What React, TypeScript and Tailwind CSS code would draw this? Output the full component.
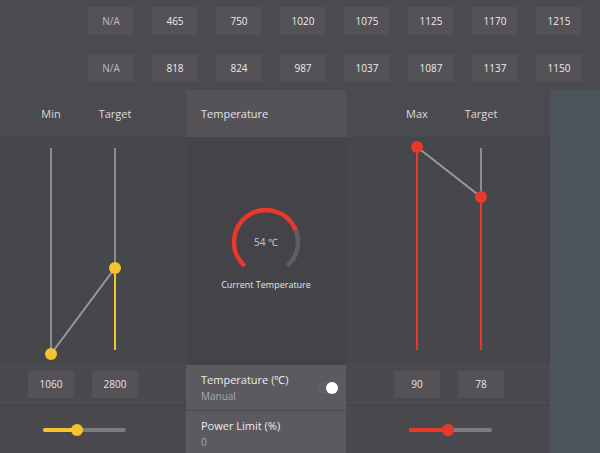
import React from "react";

const row1 = ["N/A", "465", "750", "1020", "1075", "1125", "1170", "1215"];
const row2 = ["N/A", "818", "824", "987", "1037", "1087", "1137", "1150"];

function ValueBox({ v }: { v: string }) {
  return (
    <div
      className={
        "w-[46px] h-[28px] flex items-center justify-center bg-[#545257] text-[10px] " +
        (v === "N/A" ? "text-[#bdbcc0]" : "text-[#ebebed]")
      }
    >
      {v}
    </div>
  );
}

function LeftChart() {
  return (
    <svg width="186" height="226" className="block">
      <line x1="51" y1="11" x2="51" y2="216" stroke="#8c8c8f" strokeWidth="2" />
      <line x1="115" y1="11" x2="115" y2="131" stroke="#8c8c8f" strokeWidth="2" />
      <line x1="115" y1="131" x2="115" y2="213" stroke="#f5c330" strokeWidth="2" />
      <line x1="51" y1="217" x2="115" y2="131" stroke="#9a9a9c" strokeWidth="2" />
      <circle cx="51" cy="217" r="6" fill="#f5c330" />
      <circle cx="115" cy="131" r="6" fill="#f5c330" />
    </svg>
  );
}

function RightChart() {
  return (
    <svg width="204" height="226" className="block">
      <line x1="135" y1="11" x2="135" y2="60" stroke="#8c8c8f" strokeWidth="2" />
      <line x1="71" y1="10" x2="71" y2="213" stroke="#e8392c" strokeWidth="2" />
      <line x1="135" y1="60" x2="135" y2="213" stroke="#e8392c" strokeWidth="2" />
      <line x1="71" y1="10" x2="135" y2="60" stroke="#9a9a9c" strokeWidth="2" />
      <circle cx="71" cy="10" r="6" fill="#e8392c" />
      <circle cx="135" cy="60" r="6" fill="#e8392c" />
    </svg>
  );
}

function Gauge() {
  const cx = 80;
  const cy = 35;
  const r = 32;
  const pt = (deg: number) => {
    const a = (deg * Math.PI) / 180;
    return [cx + r * Math.sin(a), cy - r * Math.cos(a)];
  };
  const [sx, sy] = pt(-135);
  const [mx, my] = pt(65);
  const [ex, ey] = pt(135);
  return (
    <svg width="160" height="66" className="block">
      <path
        d={`M ${mx} ${my} A ${r} ${r} 0 0 1 ${ex} ${ey}`}
        stroke="#5f5e63"
        strokeWidth="4.5"
        fill="none"
        strokeLinecap="round"
      />
      <path
        d={`M ${sx} ${sy} A ${r} ${r} 0 1 1 ${mx} ${my}`}
        stroke="#e8392c"
        strokeWidth="4.5"
        fill="none"
        strokeLinecap="round"
      />
      <text x={cx} y={cy + 4} textAnchor="middle" fontSize="10" fill="#c9c8cc" fontFamily="'Open Sans', sans-serif">
        54 ℃
      </text>
    </svg>
  );
}

function Slider({ fill, color }: { fill: number; color: string }) {
  return (
    <div className="relative w-[83px] h-[12px] flex items-center">
      <div className="w-full h-[4px] rounded-full bg-[#7c7b7f]" />
      <div
        className="absolute left-0 h-[4px] rounded-full"
        style={{ width: fill, background: color }}
      />
      <div
        className="absolute w-[12px] h-[12px] rounded-full"
        style={{ left: fill - 6, background: color }}
      />
    </div>
  );
}

export default function App() {
  return (
    <div
      className="w-[600px] h-[453px] overflow-hidden bg-[#4b4a4f] text-[#e6e6e8]"
      style={{ fontFamily: "'Open Sans', 'Noto Sans', sans-serif" }}
    >
      {/* top rows */}
      <div className="h-[90px] pt-[7px] flex flex-col gap-[19px] bg-[#4b4a4f]">
        <div className="flex pl-[88px] gap-[18px]">
          {row1.map((v, i) => (
            <ValueBox key={i} v={v} />
          ))}
        </div>
        <div className="flex pl-[88px] gap-[18px]">
          {row2.map((v, i) => (
            <ValueBox key={i} v={v} />
          ))}
        </div>
      </div>

      <div className="flex h-[363px]">
        {/* left panel */}
        <div className="w-[186px] flex flex-col">
          <div className="h-[47px] flex items-center pt-[1px] pl-[28px] gap-[18px] bg-[#4b4a4e] text-[11px] text-[#dcdcde]">
            <div className="w-[46px] text-center">Min</div>
            <div className="w-[46px] text-center">Target</div>
          </div>
          <div className="h-[226px] bg-[#46474b]">
            <LeftChart />
          </div>
          <div className="h-[42px] flex items-center pl-[28px] gap-[18px] bg-[#4a494d] text-[10px]">
            <div className="w-[46px] h-[27px] flex items-center justify-center bg-[#545257]">1060</div>
            <div className="w-[46px] h-[27px] flex items-center justify-center bg-[#545257]">2800</div>
          </div>
          <div className="h-[48px] flex items-center pl-[43px] bg-[#4a494d] border-t border-[#403f43]">
            <Slider fill={34} color="#f5c330" />
          </div>
        </div>

        {/* middle panel */}
        <div className="w-[160px] flex flex-col bg-[#444347]">
          <div className="h-[47px] flex items-center pt-[1px] pl-[15px] bg-[#555358] text-[11px] text-[#e2e2e4]">
            Temperature
          </div>
          <div className="h-[226px] flex flex-col items-center pt-[70px]">
            <Gauge />
            <div className="mt-[5px] text-[9px] text-[#e6e6e8]">Current Temperature</div>
          </div>
          <div className="h-[2px]" />
          <div className="h-[45px] bg-[#5b5a5f] pl-[15px] pr-[8px] flex items-center justify-between">
            <div className="flex flex-col leading-[16px]">
              <span className="text-[11px] text-[#ececee]">Temperature (℃)</span>
              <span className="text-[10px] text-[#a9a8ac]">Manual</span>
            </div>
            <div className="relative w-[20px] h-[12px] rounded-full bg-[#605f64] flex items-center justify-end">
              <div className="w-[12px] h-[12px] rounded-full bg-white" />
            </div>
          </div>
          <div className="h-[1px] bg-[#4a494e]" />
          <div className="flex-1 bg-[#5b5a5f] pl-[15px] pt-[4px] flex flex-col justify-center leading-[16px]">
            <span className="text-[11px] text-[#ececee]">Power Limit (%)</span>
            <span className="text-[10px] text-[#a9a8ac]">0</span>
          </div>
        </div>

        {/* right panel */}
        <div className="w-[204px] flex flex-col">
          <div className="h-[47px] flex items-center pt-[1px] pl-[48px] gap-[18px] bg-[#4b4a4e] text-[11px] text-[#dcdcde]">
            <div className="w-[46px] text-center">Max</div>
            <div className="w-[46px] text-center">Target</div>
          </div>
          <div className="h-[226px] bg-[#46474b]">
            <RightChart />
          </div>
          <div className="h-[42px] flex items-center pl-[48px] gap-[18px] bg-[#4a494d] text-[10px]">
            <div className="w-[46px] h-[27px] flex items-center justify-center bg-[#545257]">90</div>
            <div className="w-[46px] h-[27px] flex items-center justify-center bg-[#545257]">78</div>
          </div>
          <div className="h-[48px] flex items-center pl-[63px] bg-[#4a494d] border-t border-[#403f43]">
            <Slider fill={39} color="#e8392c" />
          </div>
        </div>

        {/* right strip */}
        <div className="flex-1 bg-[#4e545b]" />
      </div>
    </div>
  );
}
